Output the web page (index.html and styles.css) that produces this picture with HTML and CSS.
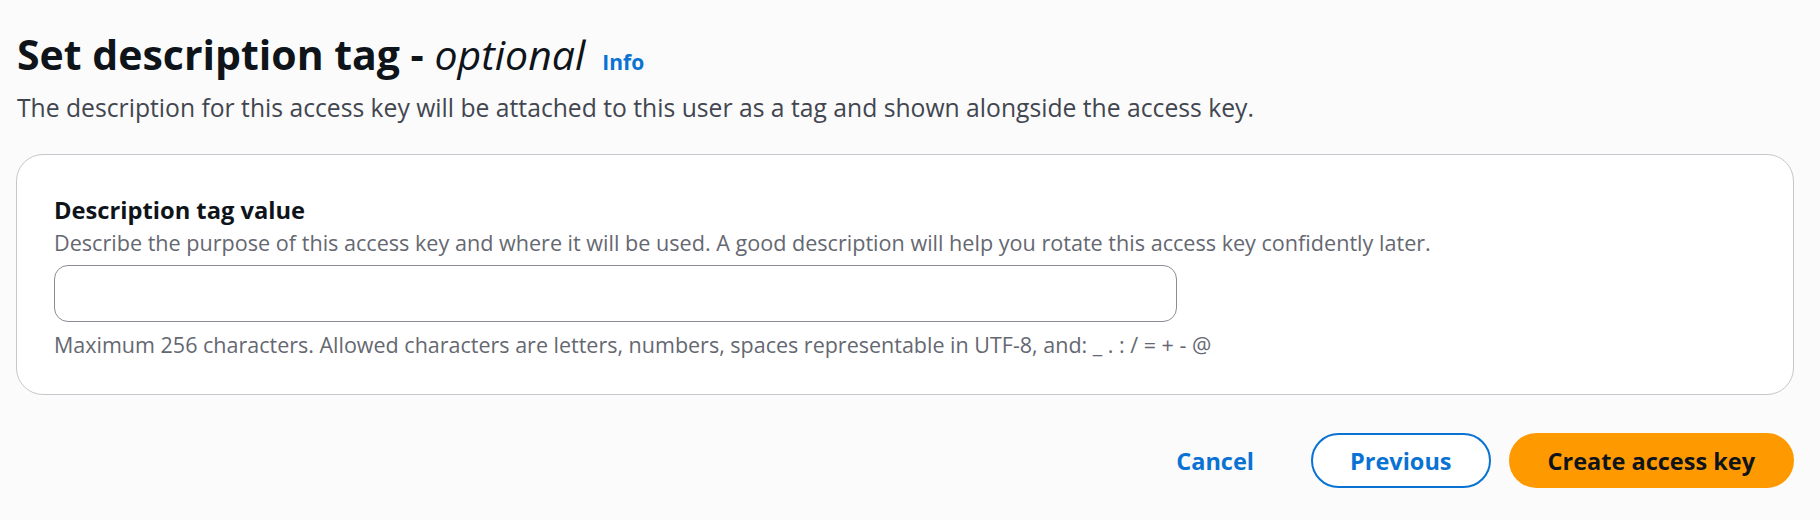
FILE: index.html
```html
<!DOCTYPE html>
<html lang="en">
<head>
<meta charset="utf-8">
<title>Set description tag</title>
<link rel="stylesheet" href="styles.css">
</head>
<body>
<main class="page">
  <header class="header">
    <h1 class="title"><span class="title-main">Set description tag - </span><em class="title-opt">optional</em><a class="info" href="#">Info</a></h1>
    <p class="lead">The description for this access key will be attached to this user as a tag and shown alongside the access key.</p>
  </header>
  <section class="card">
    <label class="label" for="desc">Description tag value</label>
    <p class="desc">Describe the purpose of this access key and where it will be used. A good description will help you rotate this access key confidently later.</p>
    <input class="input" id="desc" type="text">
    <p class="constraint">Maximum 256 characters. Allowed characters are letters, numbers, spaces representable in UTF-8, and: _ . : / = + - @</p>
  </section>
  <div class="actions">
    <button class="btn btn-link" type="button">Cancel</button>
    <button class="btn btn-normal" type="button">Previous</button>
    <button class="btn btn-primary" type="button">Create access key</button>
  </div>
</main>
</body>
</html>
```

FILE: styles.css
```css
* { box-sizing: border-box; }
html, body { margin: 0; padding: 0; }
body {
  background: #fbfbfb;
  font-family: "Open Sans", "Noto Sans", sans-serif;
  color: #0f141a;
  width: 1820px;
  height: 520px;
  overflow: hidden;
}
.page {
  padding: 29px 26px 0 16px;
  display: flex;
  flex-direction: column;
}
.header { padding-left: 1px; }
.title {
  margin: 0;
  font-size: 41px;
  line-height: 50px;
  font-weight: 700;
  color: #0f141a;
  display: flex;
  align-items: baseline;
}
.title-main { white-space: pre; }
.title-opt { font-weight: 400; font-style: italic; }
.info {
  margin-left: 17px;
  font-size: 21px;
  line-height: 1;
  font-weight: 700;
  color: #0972d3;
  text-decoration: none;
}
.lead {
  margin: 13px 0 0 0;
  font-size: 24.7px;
  line-height: 32px;
  color: #424650;
}
.card {
  margin-top: 30px;
  background: #ffffff;
  border: 1px solid #c6c6cd;
  border-radius: 27px;
  padding: 40px 37px 35px 37px;
  display: flex;
  flex-direction: column;
}
.label {
  font-size: 23.7px;
  line-height: 30px;
  font-weight: 700;
  color: #0f141a;
}
.desc {
  margin: 4px 0 0 0;
  font-size: 21.6px;
  line-height: 28px;
  color: #656871;
}
.input {
  margin-top: 8px;
  width: 1123px;
  height: 57px;
  border: 1px solid #8c8c94;
  border-radius: 14px;
  background: #ffffff;
  font: inherit;
}
.constraint {
  margin: 9px 0 0 0;
  font-size: 21.5px;
  line-height: 28px;
  color: #656871;
}
.actions {
  margin-top: 38px;
  display: flex;
  justify-content: flex-end;
  gap: 18px;
}
.btn {
  height: 55px;
  padding: 0 37px;
  border-radius: 28px;
  border: 2px solid transparent;
  font-family: inherit;
  font-size: 23.5px;
  font-weight: 700;
  display: inline-flex;
  align-items: center;
  background: transparent;
}
.btn-link { color: #0972d3; }
.btn-normal { color: #0972d3; border-color: #0972d3; background: #ffffff; }
.btn-primary { background: #ff9900; border-color: #ff9900; color: #0f141a; }
```
